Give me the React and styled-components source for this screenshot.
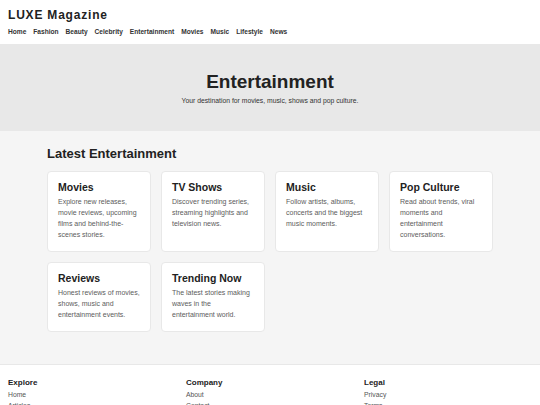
import React from 'react';
import styled, { createGlobalStyle } from 'styled-components';

const GlobalStyle = createGlobalStyle`
  * { box-sizing: border-box; }
  body {
    margin: 0;
    font-family: "Liberation Sans", Arial, sans-serif;
    color: #222;
    background: #fff;
  }
  h1, h2, h3, h4, p { margin: 0; padding: 0; }
`;

const navItems = ['Home', 'Fashion', 'Beauty', 'Celebrity', 'Entertainment', 'Movies', 'Music', 'Lifestyle', 'News'];

const cards = [
  { title: 'Movies', text: 'Explore new releases, movie reviews, upcoming films and behind-the-scenes stories.' },
  { title: 'TV Shows', text: 'Discover trending series, streaming highlights and television news.' },
  { title: 'Music', text: 'Follow artists, albums, concerts and the biggest music moments.' },
  { title: 'Pop Culture', text: 'Read about trends, viral moments and entertainment conversations.' },
  { title: 'Reviews', text: 'Honest reviews of movies, shows, music and entertainment events.' },
  { title: 'Trending Now', text: 'The latest stories making waves in the entertainment world.' },
];

const footerCols = [
  { title: 'Explore', links: ['Home', 'Articles'] },
  { title: 'Company', links: ['About', 'Contact'] },
  { title: 'Legal', links: ['Privacy', 'Terms'] },
];

export default function App() {
  return (
    <>
      <GlobalStyle />
      <Header>
        <Logo>LUXE Magazine</Logo>
        <Nav>
          {navItems.map((n) => (
            <NavLink key={n}>{n}</NavLink>
          ))}
        </Nav>
      </Header>
      <Hero>
        <HeroTitle>Entertainment</HeroTitle>
        <HeroText>Your destination for movies, music, shows and pop culture.</HeroText>
      </Hero>
      <Main>
        <Container>
          <SectionTitle>Latest Entertainment</SectionTitle>
          <Grid>
            {cards.map((c) => (
              <Card key={c.title}>
                <CardTitle>{c.title}</CardTitle>
                <CardText>{c.text}</CardText>
              </Card>
            ))}
          </Grid>
        </Container>
      </Main>
      <Footer>
        {footerCols.map((col) => (
          <FooterCol key={col.title}>
            <FooterTitle>{col.title}</FooterTitle>
            {col.links.map((l) => (
              <FooterLink key={l}>{l}</FooterLink>
            ))}
          </FooterCol>
        ))}
      </Footer>
    </>
  );
}

const Header = styled.header`
  padding: 8px 8px 8px;
  background: #fff;
`;

const Logo = styled.h1`
  font-size: 12px;
  font-weight: 700;
  letter-spacing: 0.8px;
  line-height: 14px;
  color: #222;
`;

const Nav = styled.nav`
  display: flex;
  gap: 7px;
  margin-top: 5px;
`;

const NavLink = styled.a`
  font-size: 6.6px;
  font-weight: 700;
  line-height: 9px;
  color: #333;
`;

const Hero = styled.section`
  background: #e8e8e8;
  height: 87px;
  display: flex;
  flex-direction: column;
  align-items: center;
  justify-content: center;
  padding-top: 2px;
`;

const HeroTitle = styled.h2`
  font-size: 19px;
  font-weight: 700;
  line-height: 22px;
  color: #222;
`;

const HeroText = styled.p`
  font-size: 6.8px;
  line-height: 10px;
  margin-top: 3px;
  color: #333;
`;

const Main = styled.main`
  background: #f5f5f5;
  padding: 15px 0 32px;
`;

const Container = styled.div`
  width: 446px;
  margin: 0 auto;
`;

const SectionTitle = styled.h2`
  font-size: 13px;
  font-weight: 700;
  line-height: 15px;
  color: #222;
  margin-bottom: 10px;
`;

const Grid = styled.div`
  display: grid;
  grid-template-columns: repeat(4, 104px);
  gap: 10px;
`;

const Card = styled.div`
  background: #fff;
  border: 1px solid #e8e8e8;
  border-radius: 4px;
  padding: 9px 10px 11px;
`;

const CardTitle = styled.h3`
  font-size: 10.5px;
  font-weight: 700;
  line-height: 12px;
  color: #222;
  margin-bottom: 3px;
`;

const CardText = styled.p`
  font-size: 7px;
  line-height: 11px;
  color: #5c5c5c;
`;

const Footer = styled.footer`
  background: #fff;
  border-top: 1px solid #e8e8e8;
  display: grid;
  grid-template-columns: repeat(3, 1fr);
  column-gap: 10px;
  padding: 13px 8px 10px;
`;

const FooterCol = styled.div`
  display: flex;
  flex-direction: column;
`;

const FooterTitle = styled.h4`
  font-size: 8px;
  font-weight: 700;
  line-height: 10px;
  color: #222;
  margin-bottom: 1px;
`;

const FooterLink = styled.a`
  font-size: 6.8px;
  line-height: 11px;
  color: #555;
`;
